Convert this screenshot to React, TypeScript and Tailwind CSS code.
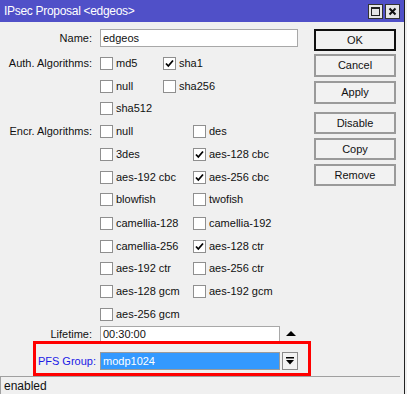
import React from "react";

const font = { fontFamily: '"Liberation Sans", Arial, sans-serif' };

function Check({ checked }: { checked?: boolean }) {
  return (
    <div className="w-[13px] h-[13px] bg-white border border-[#8f8f8f] flex items-center justify-center shrink-0">
      {checked && (
        <svg width="9" height="9" viewBox="0 0 9 9">
          <path d="M1 4.5 L3.3 7 L8 1.5" stroke="#000" strokeWidth="1.8" fill="none" />
        </svg>
      )}
    </div>
  );
}

function CB({ label, checked, w }: { label: string; checked?: boolean; w: string }) {
  return (
    <div className={`flex items-center gap-[3px] ${w}`}>
      <Check checked={checked} />
      <span className="text-[11px] text-[#111] leading-none">{label}</span>
    </div>
  );
}

function Row({
  label,
  h,
  children,
}: {
  label?: string;
  h: string;
  children?: React.ReactNode;
}) {
  return (
    <div className={`flex items-center ${h}`}>
      <div className="w-[92px] text-right text-[11px] text-[#111] leading-none pr-0">{label}</div>
      <div className="ml-[8px] flex items-center">{children}</div>
    </div>
  );
}

function Btn({ label, primary, h }: { label: string; primary?: boolean; h: string }) {
  return (
    <div
      className={`${h} w-[82px] flex items-center justify-center text-[11px] text-[#111] bg-[#f2f2f2] ${
        primary ? "border-2 border-[#111]" : "border-2 border-[#9a9a9a]"
      }`}
    >
      {label}
    </div>
  );
}

export default function App() {
  const encr: [string, boolean, string, boolean][] = [
    ["null", false, "des", false],
    ["3des", false, "aes-128 cbc", true],
    ["aes-192 cbc", false, "aes-256 cbc", true],
    ["blowfish", false, "twofish", false],
    ["camellia-128", false, "camellia-192", false],
    ["camellia-256", false, "aes-128 ctr", true],
    ["aes-192 ctr", false, "aes-256 ctr", false],
    ["aes-128 gcm", false, "aes-192 gcm", false],
  ];
  const encrH = ["h-[23px]", "h-[23px]", "h-[22px]", "h-[23px]", "h-[24px]", "h-[22px]", "h-[23px]", "h-[23px]"];
  return (
    <div className="w-[407px] h-[394px] flex bg-[#f0f0f0] overflow-hidden" style={font}>
      <div className="w-[404px] h-full flex flex-col">
        {/* title bar */}
        <div className="h-[22px] bg-[#5050c8] flex items-center pl-[4px] pr-[4px] shrink-0">
          <span className="text-white text-[12px] leading-none tracking-[-0.3px]">IPsec Proposal &lt;edgeos&gt;</span>
          <div className="ml-auto flex gap-[2px]">
            <div className="w-[15px] h-[15px] bg-[#e6e6e6] border border-[#333] flex items-center justify-center">
              <div className="w-[9px] h-[9px] border border-[#222] border-t-2" />
            </div>
            <div className="w-[15px] h-[15px] bg-[#e6e6e6] border border-[#333] flex items-center justify-center">
              <svg width="9" height="9" viewBox="0 0 9 9">
                <path d="M1.5 1.5 L7.5 7.5 M7.5 1.5 L1.5 7.5" stroke="#111" strokeWidth="2" />
              </svg>
            </div>
          </div>
        </div>
        {/* body */}
        <div className="flex-1 flex">
          <div className="w-[314px] flex flex-col pt-[7px]">
            <Row label="Name:" h="h-[18px]">
              <div className="w-[198px] h-[18px] bg-white border border-[#a8a8a8] flex items-center pl-[2px] text-[11px] text-[#111]">
                edgeos
              </div>
            </Row>
            <div className="h-[5px]" />
            <Row label="Auth. Algorithms:" h="h-[23px]">
              <CB label="md5" w="w-[63px]" />
              <CB label="sha1" checked w="w-[70px]" />
            </Row>
            <Row h="h-[22px]">
              <CB label="null" w="w-[63px]" />
              <CB label="sha256" w="w-[70px]" />
            </Row>
            <Row h="h-[23px]">
              <CB label="sha512" w="w-[93px]" />
            </Row>
            {encr.map(([a, ac, b, bc], i) => (
              <Row key={a} label={i === 0 ? "Encr. Algorithms:" : undefined} h={encrH[i]}>
                <CB label={a} checked={ac} w="w-[93px]" />
                <CB label={b} checked={bc} w="w-[100px]" />
              </Row>
            ))}
            <Row h="h-[23px]">
              <CB label="aes-256 gcm" w="w-[93px]" />
            </Row>
            <Row label="Lifetime:" h="h-[17px]">
              <div className="w-[180px] h-[17px] bg-white border border-[#a8a8a8] flex items-center pl-[2px] text-[11px] text-[#111]">
                00:30:00
              </div>
              <svg className="ml-[6px] mb-[3px]" width="10" height="5" viewBox="0 0 10 5">
                <path d="M0 5 L5 0 L10 5 Z" fill="#000" />
              </svg>
            </Row>
            <div className="relative mt-[9px] h-[18px] flex items-center">
              <div className="w-[96px] text-right text-[11px] text-[#1a1ae6] leading-none">PFS Group:</div>
              <div className="ml-[4px] w-[180px] h-[18px] bg-[#3399ff] border border-[#9a9a9a] flex items-center pl-[2px] text-[11px] text-white">
                modp1024
              </div>
              <div className="ml-[2px] w-[16px] h-[18px] bg-[#f2f2f2] border border-[#8a8a8a] flex items-center justify-center">
                <svg width="8" height="8" viewBox="0 0 8 8">
                  <rect x="0" y="0" width="8" height="1.5" fill="#000" />
                  <path d="M0 3 L8 3 L4 7.5 Z" fill="#000" />
                </svg>
              </div>
              <div className="absolute left-[33px] top-[-11px] w-[278px] h-[35px] border-[3px] border-[#ff0000] pointer-events-none" />
            </div>
          </div>
          <div className="flex flex-col pt-[7px]">
            <Btn label="OK" primary h="h-[22px]" />
            <div className="h-[3px]" />
            <Btn label="Cancel" h="h-[23px]" />
            <div className="h-[4px]" />
            <Btn label="Apply" h="h-[23px]" />
            <div className="h-[8px]" />
            <Btn label="Disable" h="h-[22px]" />
            <div className="h-[4px]" />
            <Btn label="Copy" h="h-[22px]" />
            <div className="h-[4px]" />
            <Btn label="Remove" h="h-[22px]" />
          </div>
        </div>
        {/* status bar */}
        <div className="h-[18px] shrink-0 border-t border-l border-[#a0a0a0] mr-[4px] flex items-center pl-[3px] text-[12px] text-[#111]">
          enabled
        </div>
      </div>
      <div className="w-[1px] h-full bg-[#222]" />
      <div className="flex-1 h-full bg-[#f0f0f0]" />
    </div>
  );
}
